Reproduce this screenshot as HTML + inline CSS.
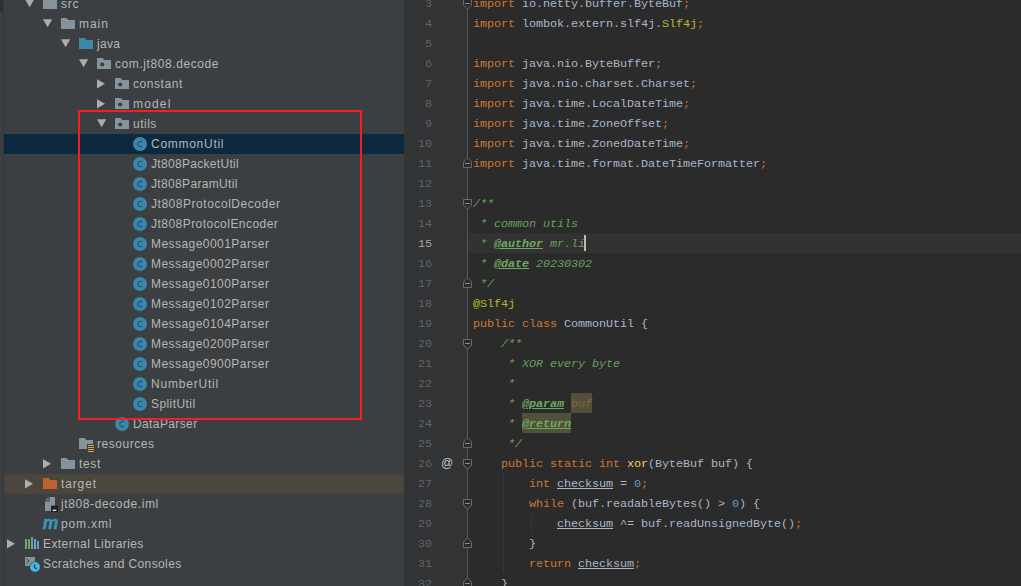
<!DOCTYPE html>
<html><head><meta charset="utf-8"><title>CommonUtil.java</title>
<style>
html,body{margin:0;padding:0;background:#2b2b2b;}
body{width:1021px;height:586px;overflow:hidden;position:relative;font-family:"Liberation Sans",sans-serif;}
#tree{position:absolute;left:0;top:0;width:404px;height:586px;background:#3c3f41;overflow:hidden;}
#strip{position:absolute;left:0;top:0;width:3px;height:12px;background:#2d2f30;}
#vline{position:absolute;left:3px;top:0;width:1px;height:586px;background:#323537;}
.sel,.exc{position:absolute;left:4px;width:400px;height:20px;}
.sel{background:#0d293e;}
.exc{background:#4b463b;}
.ic{position:absolute;display:block;overflow:visible;}
.lb{position:absolute;height:20px;line-height:20px;font-size:12px;color:#b6b6b6;white-space:pre;}
#red{position:absolute;left:78px;top:110px;width:280px;height:306px;border:2px solid #fb1b24;}
#ed{position:absolute;left:404px;top:0;width:617px;height:586px;background:#2b2b2b;overflow:hidden;}
#gut{position:absolute;left:0;top:0;width:63px;height:586px;background:#313335;}
#gl{position:absolute;left:63px;top:0;width:1px;height:586px;background:#555555;}
#cur{position:absolute;left:64px;top:233px;width:553px;height:20px;background:#323232;}
#ed .ic{margin-left:-404px;}
.ln{position:absolute;left:0;width:28px;text-align:right;height:20px;line-height:22px;font-family:"Liberation Mono",monospace;font-size:11.8px;letter-spacing:-0.08px;color:#606366;}
.ln.cur{color:#a4a3a3;}
.cl{position:absolute;left:69px;margin:0;height:20px;line-height:22px;font-family:"Liberation Mono",monospace;font-size:11.8px;letter-spacing:-0.08px;color:#a9b7c6;white-space:pre;}
.k{color:#cc7832}.t{color:#a9b7c6}.a{color:#bbb529}.n{color:#6897bb}.m{color:#ffc66d}
.d{color:#67a05a;font-style:italic}
.g{color:#6cab5e;font-style:italic;font-weight:bold;text-decoration:underline}
.h{color:#6cab5e;font-style:italic;font-weight:bold;text-decoration:underline}
.p{color:#8a653b;font-style:italic}
.hb{position:absolute;height:20px;background:#52503a}
.u{text-decoration:underline}
.ig{position:absolute;width:1px;background:#373737;}
#caret{position:absolute;left:180px;top:235px;width:2px;height:16px;background:#bbbbbb;}
#at{position:absolute;left:37px;top:453px;width:12px;height:20px;line-height:20px;font-size:12px;color:#c4c4c4;text-align:center;}
</style></head>
<body>
<div id="tree">
<div id="strip"></div><div id="vline"></div>
<svg class="ic" style="left:25px;top:-6px" width="12" height="20" viewBox="0 0 12 20"><path d="M0 5.2H9.2L4.6 13.2Z" fill="#adadad"/></svg>
<svg class="ic" style="left:43px;top:-6px" width="18" height="20" viewBox="0 0 18 20"><path transform="translate(0,4)" d="M0 0H5.5L7.5 2H14V11H0Z" fill="#87939a"/></svg>
<span class="lb" style="left:61px;top:-6px;letter-spacing:0.712px">src</span>
<svg class="ic" style="left:43px;top:14px" width="12" height="20" viewBox="0 0 12 20"><path d="M0 5.2H9.2L4.6 13.2Z" fill="#adadad"/></svg>
<svg class="ic" style="left:61px;top:14px" width="18" height="20" viewBox="0 0 18 20"><path transform="translate(0,4)" d="M0 0H5.5L7.5 2H14V11H0Z" fill="#87939a"/></svg>
<span class="lb" style="left:79px;top:14px;letter-spacing:0.932px">main</span>
<svg class="ic" style="left:61px;top:34px" width="12" height="20" viewBox="0 0 12 20"><path d="M0 5.2H9.2L4.6 13.2Z" fill="#adadad"/></svg>
<svg class="ic" style="left:79px;top:34px" width="18" height="20" viewBox="0 0 18 20"><path transform="translate(0,4)" d="M0 0H5.5L7.5 2H14V11H0Z" fill="#3e88a6"/></svg>
<span class="lb" style="left:97px;top:34px;letter-spacing:0.276px">java</span>
<svg class="ic" style="left:79px;top:54px" width="12" height="20" viewBox="0 0 12 20"><path d="M0 5.2H9.2L4.6 13.2Z" fill="#adadad"/></svg>
<svg class="ic" style="left:97px;top:54px" width="18" height="20" viewBox="0 0 18 20"><path transform="translate(0,4)" d="M0 0H5.5L7.5 2H14V11H0Z" fill="#87939a"/><circle cx="5.2" cy="10.5" r="2.1" fill="#3c3f41"/></svg>
<span class="lb" style="left:115px;top:54px;letter-spacing:0.586px">com.jt808.decode</span>
<svg class="ic" style="left:97px;top:74px" width="12" height="20" viewBox="0 0 12 20"><path d="M0 5.2V14.4L8 9.8Z" fill="#adadad"/></svg>
<svg class="ic" style="left:115px;top:74px" width="18" height="20" viewBox="0 0 18 20"><path transform="translate(0,4)" d="M0 0H5.5L7.5 2H14V11H0Z" fill="#87939a"/><circle cx="5.2" cy="10.5" r="2.1" fill="#3c3f41"/></svg>
<span class="lb" style="left:133px;top:74px;letter-spacing:0.56px">constant</span>
<svg class="ic" style="left:97px;top:94px" width="12" height="20" viewBox="0 0 12 20"><path d="M0 5.2V14.4L8 9.8Z" fill="#adadad"/></svg>
<svg class="ic" style="left:115px;top:94px" width="18" height="20" viewBox="0 0 18 20"><path transform="translate(0,4)" d="M0 0H5.5L7.5 2H14V11H0Z" fill="#87939a"/><circle cx="5.2" cy="10.5" r="2.1" fill="#3c3f41"/></svg>
<span class="lb" style="left:133px;top:94px;letter-spacing:1.163px">model</span>
<svg class="ic" style="left:97px;top:114px" width="12" height="20" viewBox="0 0 12 20"><path d="M0 5.2H9.2L4.6 13.2Z" fill="#adadad"/></svg>
<svg class="ic" style="left:115px;top:114px" width="18" height="20" viewBox="0 0 18 20"><path transform="translate(0,4)" d="M0 0H5.5L7.5 2H14V11H0Z" fill="#87939a"/><circle cx="5.2" cy="10.5" r="2.1" fill="#3c3f41"/></svg>
<span class="lb" style="left:133px;top:114px;letter-spacing:0.494px">utils</span>
<div class="sel" style="top:134px"></div>
<svg class="ic" style="left:133px;top:134px" width="18" height="20" viewBox="0 0 18 20"><circle cx="7" cy="10" r="7" fill="#3987ab"/><path d="M9.3 8.2A2.6 2.6 0 1 0 9.3 11.8" fill="none" stroke="#28526a" stroke-width="1.1"/></svg>
<span class="lb" style="left:151px;top:134px;letter-spacing:0.723px">CommonUtil</span>
<svg class="ic" style="left:133px;top:154px" width="18" height="20" viewBox="0 0 18 20"><circle cx="7" cy="10" r="7" fill="#3987ab"/><path d="M9.3 8.2A2.6 2.6 0 1 0 9.3 11.8" fill="none" stroke="#28526a" stroke-width="1.1"/></svg>
<span class="lb" style="left:151px;top:154px;letter-spacing:0.314px">Jt808PacketUtil</span>
<svg class="ic" style="left:133px;top:174px" width="18" height="20" viewBox="0 0 18 20"><circle cx="7" cy="10" r="7" fill="#3987ab"/><path d="M9.3 8.2A2.6 2.6 0 1 0 9.3 11.8" fill="none" stroke="#28526a" stroke-width="1.1"/></svg>
<span class="lb" style="left:151px;top:174px;letter-spacing:0.341px">Jt808ParamUtil</span>
<svg class="ic" style="left:133px;top:194px" width="18" height="20" viewBox="0 0 18 20"><circle cx="7" cy="10" r="7" fill="#3987ab"/><path d="M9.3 8.2A2.6 2.6 0 1 0 9.3 11.8" fill="none" stroke="#28526a" stroke-width="1.1"/></svg>
<span class="lb" style="left:151px;top:194px;letter-spacing:0.535px">Jt808ProtocolDecoder</span>
<svg class="ic" style="left:133px;top:214px" width="18" height="20" viewBox="0 0 18 20"><circle cx="7" cy="10" r="7" fill="#3987ab"/><path d="M9.3 8.2A2.6 2.6 0 1 0 9.3 11.8" fill="none" stroke="#28526a" stroke-width="1.1"/></svg>
<span class="lb" style="left:151px;top:214px;letter-spacing:0.462px">Jt808ProtocolEncoder</span>
<svg class="ic" style="left:133px;top:234px" width="18" height="20" viewBox="0 0 18 20"><circle cx="7" cy="10" r="7" fill="#3987ab"/><path d="M9.3 8.2A2.6 2.6 0 1 0 9.3 11.8" fill="none" stroke="#28526a" stroke-width="1.1"/></svg>
<span class="lb" style="left:151px;top:234px;letter-spacing:0.451px">Message0001Parser</span>
<svg class="ic" style="left:133px;top:254px" width="18" height="20" viewBox="0 0 18 20"><circle cx="7" cy="10" r="7" fill="#3987ab"/><path d="M9.3 8.2A2.6 2.6 0 1 0 9.3 11.8" fill="none" stroke="#28526a" stroke-width="1.1"/></svg>
<span class="lb" style="left:151px;top:254px;letter-spacing:0.451px">Message0002Parser</span>
<svg class="ic" style="left:133px;top:274px" width="18" height="20" viewBox="0 0 18 20"><circle cx="7" cy="10" r="7" fill="#3987ab"/><path d="M9.3 8.2A2.6 2.6 0 1 0 9.3 11.8" fill="none" stroke="#28526a" stroke-width="1.1"/></svg>
<span class="lb" style="left:151px;top:274px;letter-spacing:0.451px">Message0100Parser</span>
<svg class="ic" style="left:133px;top:294px" width="18" height="20" viewBox="0 0 18 20"><circle cx="7" cy="10" r="7" fill="#3987ab"/><path d="M9.3 8.2A2.6 2.6 0 1 0 9.3 11.8" fill="none" stroke="#28526a" stroke-width="1.1"/></svg>
<span class="lb" style="left:151px;top:294px;letter-spacing:0.451px">Message0102Parser</span>
<svg class="ic" style="left:133px;top:314px" width="18" height="20" viewBox="0 0 18 20"><circle cx="7" cy="10" r="7" fill="#3987ab"/><path d="M9.3 8.2A2.6 2.6 0 1 0 9.3 11.8" fill="none" stroke="#28526a" stroke-width="1.1"/></svg>
<span class="lb" style="left:151px;top:314px;letter-spacing:0.451px">Message0104Parser</span>
<svg class="ic" style="left:133px;top:334px" width="18" height="20" viewBox="0 0 18 20"><circle cx="7" cy="10" r="7" fill="#3987ab"/><path d="M9.3 8.2A2.6 2.6 0 1 0 9.3 11.8" fill="none" stroke="#28526a" stroke-width="1.1"/></svg>
<span class="lb" style="left:151px;top:334px;letter-spacing:0.451px">Message0200Parser</span>
<svg class="ic" style="left:133px;top:354px" width="18" height="20" viewBox="0 0 18 20"><circle cx="7" cy="10" r="7" fill="#3987ab"/><path d="M9.3 8.2A2.6 2.6 0 1 0 9.3 11.8" fill="none" stroke="#28526a" stroke-width="1.1"/></svg>
<span class="lb" style="left:151px;top:354px;letter-spacing:0.451px">Message0900Parser</span>
<svg class="ic" style="left:133px;top:374px" width="18" height="20" viewBox="0 0 18 20"><circle cx="7" cy="10" r="7" fill="#3987ab"/><path d="M9.3 8.2A2.6 2.6 0 1 0 9.3 11.8" fill="none" stroke="#28526a" stroke-width="1.1"/></svg>
<span class="lb" style="left:151px;top:374px;letter-spacing:0.805px">NumberUtil</span>
<svg class="ic" style="left:133px;top:394px" width="18" height="20" viewBox="0 0 18 20"><circle cx="7" cy="10" r="7" fill="#3987ab"/><path d="M9.3 8.2A2.6 2.6 0 1 0 9.3 11.8" fill="none" stroke="#28526a" stroke-width="1.1"/></svg>
<span class="lb" style="left:151px;top:394px;letter-spacing:0.421px">SplitUtil</span>
<svg class="ic" style="left:115px;top:414px" width="18" height="20" viewBox="0 0 18 20"><circle cx="7" cy="10" r="7" fill="#3987ab"/><path d="M9.3 8.2A2.6 2.6 0 1 0 9.3 11.8" fill="none" stroke="#28526a" stroke-width="1.1"/></svg>
<span class="lb" style="left:133px;top:414px;letter-spacing:0.385px">DataParser</span>
<svg class="ic" style="left:79px;top:434px" width="18" height="20" viewBox="0 0 18 20"><path transform="translate(0,4)" d="M0 0H5.5L7.5 2H14V11H0Z" fill="#87939a"/><rect x="8" y="10" width="8" height="9" fill="#3c3f41"/><rect x="9" y="11" width="6" height="1" fill="#dba543"/><rect x="9" y="13" width="6" height="1" fill="#dba543"/><rect x="9" y="15" width="6" height="1" fill="#dba543"/><rect x="9" y="17" width="6" height="1" fill="#dba543"/></svg>
<span class="lb" style="left:97px;top:434px;letter-spacing:0.55px">resources</span>
<svg class="ic" style="left:43px;top:454px" width="12" height="20" viewBox="0 0 12 20"><path d="M0 5.2V14.4L8 9.8Z" fill="#adadad"/></svg>
<svg class="ic" style="left:61px;top:454px" width="18" height="20" viewBox="0 0 18 20"><path transform="translate(0,4)" d="M0 0H5.5L7.5 2H14V11H0Z" fill="#87939a"/></svg>
<span class="lb" style="left:79px;top:454px;letter-spacing:0.627px">test</span>
<div class="exc" style="top:474px"></div>
<svg class="ic" style="left:25px;top:474px" width="12" height="20" viewBox="0 0 12 20"><path d="M0 5.2V14.4L8 9.8Z" fill="#adadad"/></svg>
<svg class="ic" style="left:43px;top:474px" width="18" height="20" viewBox="0 0 18 20"><path transform="translate(0,4)" d="M0 0H5.5L7.5 2H14V11H0Z" fill="#c0622e"/></svg>
<span class="lb" style="left:61px;top:474px;letter-spacing:0.873px">target</span>
<svg class="ic" style="left:43px;top:494px" width="18" height="20" viewBox="0 0 18 20"><path d="M6.6 3H12V17H2V7.6H6.6Z" fill="#87939a"/><path d="M2 6.6L5.6 3V6.6Z" fill="#87939a" opacity=".75"/><rect x="8" y="11.6" width="7" height="6.4" fill="#231f20"/><rect x="9.7" y="15.7" width="3.6" height="1.3" fill="#f0f0f0"/></svg>
<span class="lb" style="left:61px;top:494px;letter-spacing:0.612px">jt808-decode.iml</span>
<svg class="ic" style="left:41px;top:514px" width="20" height="20" viewBox="0 0 20 20"><text x="1.7" y="15" font-family="Liberation Sans, sans-serif" font-weight="bold" font-style="italic" font-size="17.5" fill="#3a98be" stroke="#3a98be" stroke-width="0.3" textLength="15.6" lengthAdjust="spacingAndGlyphs">m</text></svg>
<span class="lb" style="left:61px;top:514px;letter-spacing:0.858px">pom.xml</span>
<svg class="ic" style="left:7px;top:534px" width="12" height="20" viewBox="0 0 12 20"><path d="M0 5.2V14.4L8 9.8Z" fill="#adadad"/></svg>
<svg class="ic" style="left:25px;top:534px" width="18" height="20" viewBox="0 0 18 20"><rect x="0" y="5" width="2" height="10" fill="#87939a"/><rect x="3" y="5" width="2" height="10" fill="#62b543"/><rect x="6" y="3" width="2" height="12" fill="#87939a"/><rect x="9" y="5" width="2" height="10" fill="#40b6e0"/><rect x="12" y="7" width="2" height="8" fill="#87939a"/></svg>
<span class="lb" style="left:43px;top:534px;letter-spacing:0.407px">External Libraries</span>
<svg class="ic" style="left:25px;top:554px" width="18" height="20" viewBox="0 0 18 20"><rect x="0" y="3" width="10" height="9" fill="#87939a"/><path d="M1.5 4.8L4 7L1.5 9.2" fill="none" stroke="#3c3f41" stroke-width="1"/><circle cx="10" cy="13" r="5.6" fill="#3c3f41"/><circle cx="10" cy="13" r="5" fill="#40b6e0"/><path d="M9.5 10.5V13.3L11.8 15" fill="none" stroke="#2b4c5a" stroke-width="1.3"/></svg>
<span class="lb" style="left:43px;top:554px;letter-spacing:0.387px">Scratches and Consoles</span>
<div id="red"></div>
</div>
<div id="ed">
<div id="gut"></div><div id="gl"></div><div id="cur"></div>
<div class="hb" style="left:167px;top:393px;width:21px"></div>
<div class="hb" style="left:118px;top:413px;width:49px"></div>
<div class="ig" style="left:99px;top:473px;height:100px"></div>
<div class="ig" style="left:127px;top:513px;height:20px"></div>
<span class="ln" style="top:-7px">3</span>
<pre class="cl" style="top:-7px"><span class="k">import </span><span class="t">io.netty.buffer.ByteBuf</span><span class="k">;</span></pre>
<span class="ln" style="top:13px">4</span>
<pre class="cl" style="top:13px"><span class="k">import </span><span class="t">lombok.extern.slf4j.</span><span class="a">Slf4j</span><span class="k">;</span></pre>
<span class="ln" style="top:33px">5</span>
<span class="ln" style="top:53px">6</span>
<pre class="cl" style="top:53px"><span class="k">import </span><span class="t">java.nio.ByteBuffer</span><span class="k">;</span></pre>
<span class="ln" style="top:73px">7</span>
<pre class="cl" style="top:73px"><span class="k">import </span><span class="t">java.nio.charset.Charset</span><span class="k">;</span></pre>
<span class="ln" style="top:93px">8</span>
<pre class="cl" style="top:93px"><span class="k">import </span><span class="t">java.time.LocalDateTime</span><span class="k">;</span></pre>
<span class="ln" style="top:113px">9</span>
<pre class="cl" style="top:113px"><span class="k">import </span><span class="t">java.time.ZoneOffset</span><span class="k">;</span></pre>
<span class="ln" style="top:133px">10</span>
<pre class="cl" style="top:133px"><span class="k">import </span><span class="t">java.time.ZonedDateTime</span><span class="k">;</span></pre>
<span class="ln" style="top:153px">11</span>
<pre class="cl" style="top:153px"><span class="k">import </span><span class="t">java.time.format.DateTimeFormatter</span><span class="k">;</span></pre>
<span class="ln" style="top:173px">12</span>
<span class="ln" style="top:193px">13</span>
<pre class="cl" style="top:193px"><span class="d">/**</span></pre>
<span class="ln" style="top:213px">14</span>
<pre class="cl" style="top:213px"><span class="d"> * common utils</span></pre>
<span class="ln cur" style="top:233px">15</span>
<pre class="cl" style="top:233px"><span class="d"> * </span><span class="g">@author</span><span class="d"> mr.li</span></pre>
<span class="ln" style="top:253px">16</span>
<pre class="cl" style="top:253px"><span class="d"> * </span><span class="g">@date</span><span class="d"> 20230302</span></pre>
<span class="ln" style="top:273px">17</span>
<pre class="cl" style="top:273px"><span class="d"> */</span></pre>
<span class="ln" style="top:293px">18</span>
<pre class="cl" style="top:293px"><span class="a">@Slf4j</span></pre>
<span class="ln" style="top:313px">19</span>
<pre class="cl" style="top:313px"><span class="k">public class </span><span class="t">CommonUtil {</span></pre>
<span class="ln" style="top:333px">20</span>
<pre class="cl" style="top:333px"><span class="d">    /**</span></pre>
<span class="ln" style="top:353px">21</span>
<pre class="cl" style="top:353px"><span class="d">     * XOR every byte</span></pre>
<span class="ln" style="top:373px">22</span>
<pre class="cl" style="top:373px"><span class="d">     *</span></pre>
<span class="ln" style="top:393px">23</span>
<pre class="cl" style="top:393px"><span class="d">     * </span><span class="g">@param</span><span class="d"> </span><span class="p">buf</span></pre>
<span class="ln" style="top:413px">24</span>
<pre class="cl" style="top:413px"><span class="d">     * </span><span class="h">@return</span></pre>
<span class="ln" style="top:433px">25</span>
<pre class="cl" style="top:433px"><span class="d">     */</span></pre>
<span class="ln" style="top:453px">26</span>
<pre class="cl" style="top:453px"><span class="k">    public static int </span><span class="m">xor</span><span class="t">(ByteBuf buf) {</span></pre>
<span class="ln" style="top:473px">27</span>
<pre class="cl" style="top:473px"><span class="k">        int </span><span class="u">checksum</span><span class="t"> = </span><span class="n">0</span><span class="k">;</span></pre>
<span class="ln" style="top:493px">28</span>
<pre class="cl" style="top:493px"><span class="k">        while </span><span class="t">(buf.readableBytes() &gt; </span><span class="n">0</span><span class="t">) {</span></pre>
<span class="ln" style="top:513px">29</span>
<pre class="cl" style="top:513px"><span class="t">            </span><span class="u">checksum</span><span class="t"> ^= buf.readUnsignedByte()</span><span class="k">;</span></pre>
<span class="ln" style="top:533px">30</span>
<pre class="cl" style="top:533px"><span class="t">        }</span></pre>
<span class="ln" style="top:553px">31</span>
<pre class="cl" style="top:553px"><span class="k">        return </span><span class="u">checksum</span><span class="k">;</span></pre>
<span class="ln" style="top:573px">32</span>
<pre class="cl" style="top:573px"><span class="t">    }</span></pre>
<svg class="ic" style="left:462px;top:-2px" width="11" height="13" viewBox="0 0 11 13"><path d="M1.5 1.5H9.5V7L5.5 11.3L1.5 7Z" fill="#2b2b2b" stroke="#6a6a6a" stroke-width="1"/><path d="M3 5.5H8" stroke="#8a8a8a" stroke-width="1"/></svg>
<svg class="ic" style="left:462px;top:156px" width="11" height="13" viewBox="0 0 11 13"><path d="M1.5 11.5H9.5V6L5.5 1.7L1.5 6Z" fill="#2b2b2b" stroke="#6a6a6a" stroke-width="1"/><path d="M3 7.5H8" stroke="#8a8a8a" stroke-width="1"/></svg>
<svg class="ic" style="left:462px;top:198px" width="11" height="13" viewBox="0 0 11 13"><path d="M1.5 1.5H9.5V7L5.5 11.3L1.5 7Z" fill="#2b2b2b" stroke="#6a6a6a" stroke-width="1"/><path d="M3 5.5H8" stroke="#8a8a8a" stroke-width="1"/></svg>
<svg class="ic" style="left:462px;top:276px" width="11" height="13" viewBox="0 0 11 13"><path d="M1.5 11.5H9.5V6L5.5 1.7L1.5 6Z" fill="#2b2b2b" stroke="#6a6a6a" stroke-width="1"/><path d="M3 7.5H8" stroke="#8a8a8a" stroke-width="1"/></svg>
<svg class="ic" style="left:462px;top:338px" width="11" height="13" viewBox="0 0 11 13"><path d="M1.5 1.5H9.5V7L5.5 11.3L1.5 7Z" fill="#2b2b2b" stroke="#6a6a6a" stroke-width="1"/><path d="M3 5.5H8" stroke="#8a8a8a" stroke-width="1"/></svg>
<svg class="ic" style="left:462px;top:436px" width="11" height="13" viewBox="0 0 11 13"><path d="M1.5 11.5H9.5V6L5.5 1.7L1.5 6Z" fill="#2b2b2b" stroke="#6a6a6a" stroke-width="1"/><path d="M3 7.5H8" stroke="#8a8a8a" stroke-width="1"/></svg>
<svg class="ic" style="left:462px;top:458px" width="11" height="13" viewBox="0 0 11 13"><path d="M1.5 1.5H9.5V7L5.5 11.3L1.5 7Z" fill="#2b2b2b" stroke="#6a6a6a" stroke-width="1"/><path d="M3 5.5H8" stroke="#8a8a8a" stroke-width="1"/></svg>
<svg class="ic" style="left:462px;top:498px" width="11" height="13" viewBox="0 0 11 13"><path d="M1.5 1.5H9.5V7L5.5 11.3L1.5 7Z" fill="#2b2b2b" stroke="#6a6a6a" stroke-width="1"/><path d="M3 5.5H8" stroke="#8a8a8a" stroke-width="1"/></svg>
<svg class="ic" style="left:462px;top:536px" width="11" height="13" viewBox="0 0 11 13"><path d="M1.5 11.5H9.5V6L5.5 1.7L1.5 6Z" fill="#2b2b2b" stroke="#6a6a6a" stroke-width="1"/><path d="M3 7.5H8" stroke="#8a8a8a" stroke-width="1"/></svg>
<svg class="ic" style="left:462px;top:576px" width="11" height="13" viewBox="0 0 11 13"><path d="M1.5 11.5H9.5V6L5.5 1.7L1.5 6Z" fill="#2b2b2b" stroke="#6a6a6a" stroke-width="1"/><path d="M3 7.5H8" stroke="#8a8a8a" stroke-width="1"/></svg>
<div id="at">@</div>
<div id="caret"></div>
</div>
</body></html>
